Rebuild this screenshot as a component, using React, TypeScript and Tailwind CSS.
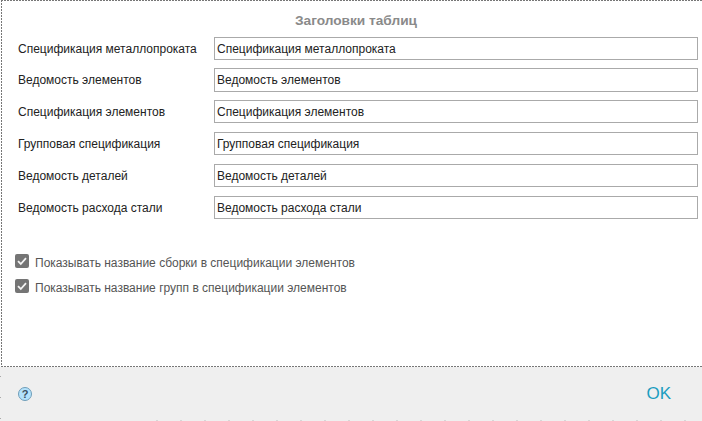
const rows = [
  "Спецификация металлопроката",
  "Ведомость элементов",
  "Спецификация элементов",
  "Групповая спецификация",
  "Ведомость деталей",
  "Ведомость расхода стали",
];
const checks = [
  "Показывать название сборки в спецификации элементов",
  "Показывать название групп в спецификации элементов",
];

function Check() {
  return (
    <span className="flex h-[14px] w-[14px] shrink-0 items-center justify-center rounded-[2px] bg-[#757575]">
      <svg width="12" height="12" viewBox="0 0 12 12" fill="none">
        <path d="M2 6.2 L4.8 9 L10 3.2" stroke="#f4f4f4" strokeWidth="1.8" />
      </svg>
    </span>
  );
}

export default function App() {
  return (
    <div className="flex h-[421px] w-[702px] flex-col overflow-hidden bg-white font-['Liberation_Sans',Arial,sans-serif]">
      <main className="h-[367px] shrink-0 pl-[18px] pr-[4px] [background-image:repeating-linear-gradient(90deg,#777_0_2px,transparent_2px_3px),repeating-linear-gradient(90deg,#777_0_2px,transparent_2px_3px),repeating-linear-gradient(180deg,#777_0_2px,transparent_2px_3px)] [background-size:100%_1px,100%_1px,1px_100%] [background-position:1px_0,1px_100%,1px_0] bg-no-repeat pt-[13px]">
        <h1 className="h-[16px] pr-[4px] text-center text-[13.7px] font-bold leading-[16px] text-[#8a8a8a]">
          Заголовки таблиц
        </h1>
        <div className="mt-[7.6px] flex flex-col gap-[8.6px]">
          {rows.map((r) => (
            <div key={r} className="flex h-[23.2px] items-center">
              <span className="w-[196px] shrink-0 pt-[1px] text-[12px] leading-[14px] text-[#222]">{r}</span>
              <input
                readOnly
                value={r}
                className="h-full w-[484px] border border-[#aaa] bg-white px-[2px] pt-[1px] text-[12px] text-[#222] outline-none"
              />
            </div>
          ))}
        </div>
        <div className="-ml-[3px] mt-[35.5px] flex flex-col gap-[11px]">
          {checks.map((c) => (
            <label key={c} className="flex h-[14px] items-center gap-[6px]">
              <Check />
              <span className="pt-[3px] text-[12px] leading-[14px] text-[#555]">{c}</span>
            </label>
          ))}
        </div>
      </main>
      <footer className="relative flex h-[54px] items-center justify-between bg-[#efefef] pl-[18px] pr-[31px]">
        <span className="flex h-[14px] w-[14px] items-center justify-center rounded-full border border-[#6f9db8] bg-[#b3e2fc] text-[11px] font-bold leading-none text-[#3a5060]">
          ?
        </span>
        <span className="text-[17px] leading-[20px] text-[#1b9dc0]">OK</span>
        <span className="absolute left-0 top-[9px] h-[1px] w-[1px] bg-[#aaa]" />
        <span className="absolute left-0 top-[30px] h-[1px] w-[1px] bg-[#aaa]" />
        <span className="absolute left-0 top-[51px] h-[1px] w-[1px] bg-[#aaa]" />
        <span className="absolute bottom-0 left-[156px] right-0 h-[1px] [background-image:repeating-linear-gradient(90deg,#d6d6d6_0_2px,transparent_2px_24px)]" />
      </footer>
    </div>
  );
}
